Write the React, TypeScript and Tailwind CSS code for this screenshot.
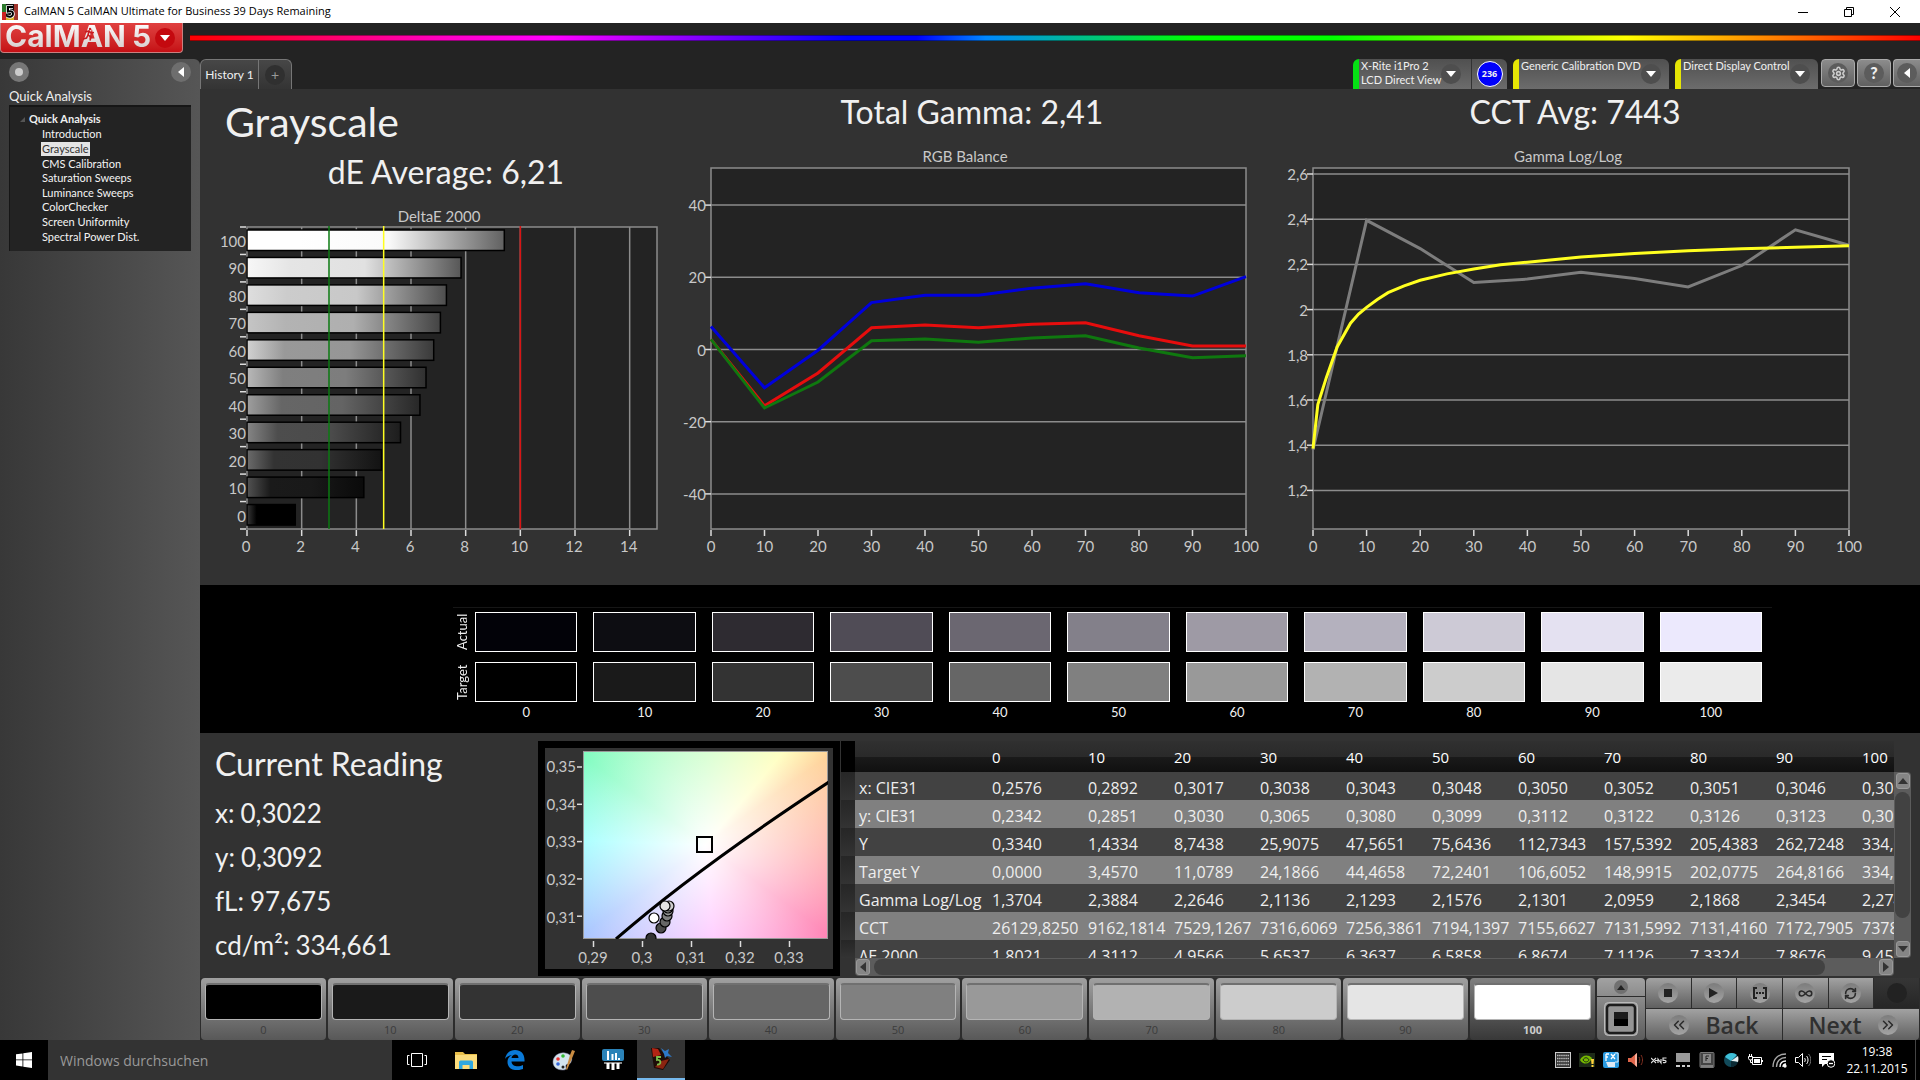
import React, { useState } from 'react';
import { Settings, RefreshCw, Infinity as InfinityIcon, ChevronsLeft, ChevronsRight } from 'lucide-react';

const LEVELS = [0, 10, 20, 30, 40, 50, 60, 70, 80, 90, 100];

const DELTA_E = [1.8021, 4.3112, 4.9566, 5.6537, 6.3637, 6.5858, 6.8674, 7.1126, 7.3324, 7.8676, 9.45];

const RGB_SERIES = [
  { color: '#0000dc', values: [6.4, -10.6, -0.2, 13, 15, 15, 17, 18.2, 15.7, 14.8, 20.2] },
  { color: '#e60d0d', values: [2.8, -15.6, -6.5, 6, 6.8, 6, 7, 7.4, 3.8, 1, 1] },
  { color: '#0f780f', values: [2.8, -16.2, -9, 2.4, 2.9, 2, 3.2, 3.8, 0.4, -2.3, -1.7] },
];

const GAMMA_MEASURED = [1.38, 2.395, 2.27, 2.12, 2.135, 2.165, 2.138, 2.1, 2.195, 2.353, 2.285];

const GAMMA_TARGET: [number, number][] = [
  [0, 1.385], [0.9, 1.58], [2.5, 1.7], [4.5, 1.835], [7, 1.94], [8.5, 1.98], [10, 2.01], [12, 2.045], [14, 2.075],
  [17, 2.105], [20, 2.13], [25, 2.158], [30, 2.18], [35, 2.198], [40, 2.21], [50, 2.233], [60, 2.248], [70, 2.26],
  [80, 2.269], [90, 2.276], [100, 2.283],
];

const SWATCHES = [
  { actual: '#020208', target: '#000000' },
  { actual: '#0d0d12', target: '#1a1a1a' },
  { actual: '#2e2b31', target: '#333333' },
  { actual: '#504c56', target: '#4d4d4d' },
  { actual: '#6b6771', target: '#666666' },
  { actual: '#83808a', target: '#808080' },
  { actual: '#9e9aa5', target: '#999999' },
  { actual: '#b4b1be', target: '#b2b2b2' },
  { actual: '#cdcad6', target: '#cccccc' },
  { actual: '#e4e1f1', target: '#e5e5e5' },
  { actual: '#ece9fd', target: '#ebebeb' },
];

const PATTERNS = ['#000000', '#1a1a1a', '#333333', '#4d4d4d', '#666666', '#808080', '#999999', '#b2b2b2', '#cccccc', '#e5e5e5', '#ffffff'];

const ROWS: { label: string; values: string[] }[] = [
  { label: 'x: CIE31', values: ['0,2576', '0,2892', '0,3017', '0,3038', '0,3043', '0,3048', '0,3050', '0,3052', '0,3051', '0,3046', '0,3022'] },
  { label: 'y: CIE31', values: ['0,2342', '0,2851', '0,3030', '0,3065', '0,3080', '0,3099', '0,3112', '0,3122', '0,3126', '0,3123', '0,3092'] },
  { label: 'Y', values: ['0,3340', '1,4334', '8,7438', '25,9075', '47,5651', '75,6436', '112,7343', '157,5392', '205,4383', '262,7248', '334,661'] },
  { label: 'Target Y', values: ['0,0000', '3,4570', '11,0789', '24,1866', '44,4658', '72,2401', '106,6052', '148,9915', '202,0775', '264,8166', '334,661'] },
  { label: 'Gamma Log/Log', values: ['1,3704', '2,3884', '2,2646', '2,1136', '2,1293', '2,1576', '2,1301', '2,0959', '2,1868', '2,3454', '2,274'] },
  { label: 'CCT', values: ['26129,8250', '9162,1814', '7529,1267', '7316,6069', '7256,3861', '7194,1397', '7155,6627', '7131,5992', '7131,4160', '7172,7905', '7378'] },
  { label: 'ΔE 2000', values: ['1,8021', '4,3112', '4,9566', '5,6537', '6,3637', '6,5858', '6,8674', '7,1126', '7,3324', '7,8676', '9,45'] },
];

const PAGES = ['Introduction', 'Grayscale', 'CMS Calibration', 'Saturation Sweeps', 'Luminance Sweeps', 'ColorChecker', 'Screen Uniformity', 'Spectral Power Dist.'];

function gray(v: number): string {
  const c = Math.max(0, Math.min(255, Math.round(v)));
  return `rgb(${c},${c},${c})`;
}

function TitleBar() {
  return (
    <div className="flex h-[23px] shrink-0 items-center bg-white px-[2px] text-black">
      <svg viewBox="0 0 16 16" className="h-4 w-4">
        <rect width="16" height="16" fill="#111" />
        <path d="M0 0h4v8H0z" fill="#2c7a2c" />
        <path d="M0 8h4v8H0z" fill="#c22" />
        <path d="M12 0h4v16h-4z" fill="#a0342c" />
        <path d="M4 13h8v3H4z" fill="#d8b020" />
        <path d="M11 3H6v4.500c4-1 5 .5 5 2.500 0 2.500-3 3.500-6 2" fill="none" stroke="#fff" strokeWidth="3.600" />
        <path d="M11 3H6v4.500c4-1 5 .5 5 2.500 0 2.500-3 3.500-6 2" fill="none" stroke="#000" strokeWidth="2" />
      </svg>
      <span className="ml-1.5 font-['Open_Sans',sans-serif] text-[11px]">CalMAN 5 CalMAN Ultimate for Business 39 Days Remaining</span>
      <div className="ml-auto flex h-full">
        <button type="button" aria-label="Minimize" className="flex w-[46px] items-center justify-center">
          <svg viewBox="0 0 10 10" className="h-[10px] w-[10px]"><path d="M0 5.500h10" stroke="#000" /></svg>
        </button>
        <button type="button" aria-label="Restore" className="flex w-[46px] items-center justify-center">
          <svg viewBox="0 0 10 10" className="h-[10px] w-[10px]" fill="none" stroke="#000">
            <path d="M.5 2.500h7v7h-7zM2.500 2.500v-2h7v7h-2" />
          </svg>
        </button>
        <button type="button" aria-label="Close" className="flex w-[46px] items-center justify-center">
          <svg viewBox="0 0 10 10" className="h-[10px] w-[10px]"><path d="M0 0l10 10M10 0L0 10" stroke="#000" /></svg>
        </button>
      </div>
    </div>
  );
}

function Header() {
  return (
    <div className="flex h-9 shrink-0 items-start">
      <button
        type="button"
        aria-label="CalMAN 5 menu"
        className="flex h-[30px] w-[183px] items-center rounded-b border border-t-0 border-[#c98080] bg-linear-to-b from-[#e04040] to-[#c50e14] pl-1"
      >
        <span className="relative bg-linear-to-b from-white to-[#cfc4c4] bg-clip-text pb-1 font-['Inter',sans-serif] text-[30px] leading-7 font-bold text-transparent">
          CalMAN
          <svg viewBox="0 0 12 14" className="absolute top-[5px] left-[78px] h-[14px] w-3" fill="none" stroke="#c91c20" strokeWidth="1.600">
            <circle cx="7" cy="2" r="1.200" fill="#c91c20" stroke="none" />
            <path d="M2 5l4-1 2 2 3-.5M6 4.500L5 8l3 2-1 3.500M5 8l-1.500 3L0 12" />
          </svg>
        </span>
        <span className="ml-1.5 bg-linear-to-b from-white to-[#cfc4c4] bg-clip-text pb-1 font-['Inter',sans-serif] text-[30px] leading-7 font-bold text-transparent">5</span>
        <span className="ml-auto mr-[7px] flex h-5 w-5 items-center justify-center rounded-full bg-[#c4090f]">
          <svg viewBox="0 0 10 6" className="h-[6px] w-[10px]"><path d="M0 0h10L5 6z" fill="#fff" /></svg>
        </span>
      </button>
      <div className="mt-3 ml-[7px] h-1.5 flex-1 border-y border-black/40 bg-[linear-gradient(90deg,#f00_0%,#ff00c8_15%,#f0f_21%,#80f_29%,#00f_38%,#00f_42%,#08f_46%,#0f0_58%,#0f0_66%,#ff0_83%,#f80_91%,#f00_100%)]" />
    </div>
  );
}

function Sidebar() {
  const [page, setPage] = useState('Grayscale');
  return (
    <aside className="flex w-[200px] shrink-0 flex-col rounded-tr-md bg-linear-to-r from-[#383838] to-[#565656] px-[9px] font-['Lato',sans-serif] text-[#eee]">
      <div className="flex h-[26px] items-center justify-between">
        <button type="button" aria-label="Record" className="flex h-5 w-5 items-center justify-center rounded-full bg-[#777]">
          <span className="h-2 w-2 rounded-full bg-[#ccc]" />
        </button>
        <button type="button" aria-label="Collapse sidebar" className="flex h-5 w-5 items-center justify-center rounded-full bg-[#6e6e6e]">
          <svg viewBox="0 0 6 10" className="h-[10px] w-[6px]"><path d="M6 0v10L0 5z" fill="#fff" /></svg>
        </button>
      </div>
      <h2 className="mt-[3px] text-[13px] leading-[17px]">Quick Analysis</h2>
      <nav className="h-[146px] border-t-2 border-l border-[#161616] bg-[#232323] pt-1 pl-[10px] text-[11px]">
        <div className="flex h-4 items-center gap-1 font-bold">
          <svg viewBox="0 0 5 5" className="h-[5px] w-[5px]"><path d="M5 0v5H0z" fill="#555" /></svg>
          Quick Analysis
        </div>
        <ul className="grid h-[117px] grid-rows-8 pl-[21px] leading-[14px]">
          {PAGES.map((name) => (
            <li key={name} className="flex">
              <button
                type="button"
                onClick={() => setPage(name)}
                className={name === page ? 'bg-[#e4e4e4] px-px text-[#333]' : 'px-px text-[#f4f4f4]'}
              >
                {name}
              </button>
            </li>
          ))}
        </ul>
      </nav>
    </aside>
  );
}

function CaretButton({ label }: { label: string }) {
  return (
    <button type="button" aria-label={label} className="flex h-5 w-5 items-center justify-center rounded-full bg-[#4e4e4e]">
      <svg viewBox="0 0 10 6" className="h-[6px] w-[10px]"><path d="M0 0h10L5 6z" fill="#fff" /></svg>
    </button>
  );
}

function TopTabs() {
  const square = 'flex h-[28px] items-center justify-center rounded border border-[#aaa] bg-linear-to-b from-[#8c8c8c] to-[#606060]';
  return (
    <div className="flex h-[30px] shrink-0 font-['Lato',sans-serif] text-[#f0f0f0]">
      <div className="flex rounded-t-md border border-b-0 border-[#767676] bg-linear-to-b from-[#474747] to-[#343434]">
        <button type="button" className="w-[58px] border-r border-[#767676] text-[12px]">History 1</button>
        <button type="button" aria-label="Add history" className="flex w-8 items-center justify-center">
          <span className="flex h-5 w-5 items-center justify-center rounded-full bg-[#303030] text-[14px] text-[#999]">+</span>
        </button>
      </div>
      <div className="ml-auto flex text-[11px] leading-[14px]">
        <div className="flex w-[154px] overflow-hidden rounded-t-md border-l-[6px] border-[#05e014] bg-linear-to-b from-[#505050] to-[#6c6c6c]">
          <div className="w-[82px] pl-[2px] whitespace-nowrap">X-Rite i1Pro 2<br />LCD Direct View</div>
          <div className="flex w-[30px] items-center"><CaretButton label="Select meter" /></div>
          <div className="flex flex-1 items-center justify-center border-l border-[#333]">
            <span className="flex h-[26px] w-[26px] items-center justify-center rounded-full border border-white bg-[#0000fa] font-['Open_Sans',sans-serif] text-[9px] font-bold">236</span>
          </div>
        </div>
        <div className="ml-[6px] flex w-[156px] justify-between overflow-hidden rounded-t-md border-l-[6px] border-[#e6e605] bg-linear-to-b from-[#505050] to-[#6c6c6c]">
          <span className="pl-[2px] whitespace-nowrap">Generic Calibration DVD</span>
          <div className="mr-2 flex items-center"><CaretButton label="Select source" /></div>
        </div>
        <div className="ml-[6px] flex w-[143px] justify-between overflow-hidden rounded-t-md border-l-[6px] border-[#e6e605] bg-linear-to-b from-[#505050] to-[#6c6c6c]">
          <span className="pl-[2px] whitespace-nowrap">Direct Display Control</span>
          <div className="mr-2 flex items-center"><CaretButton label="Select display" /></div>
        </div>
        <div className="ml-[3px] flex gap-[2px]">
          <button type="button" aria-label="Settings" className={`${square} w-[34px]`}>
            <span className="flex h-5 w-5 items-center justify-center rounded-full bg-[#5c5c5c]"><Settings size={15} strokeWidth={2.5} className="text-[#ccc]" /></span>
          </button>
          <button type="button" aria-label="Help" className={`${square} w-[34px]`}>
            <span className="flex h-5 w-5 items-center justify-center rounded-full bg-[#5c5c5c] text-[16px] font-black">?</span>
          </button>
          <button type="button" aria-label="Collapse" className={`${square} w-[27px] rounded-r-none border-r-0`}>
            <span className="flex h-5 w-5 items-center justify-center rounded-full bg-[#5c5c5c]">
              <svg viewBox="0 0 6 10" className="h-[10px] w-[6px]"><path d="M6 0v10L0 5z" fill="#fff" /></svg>
            </span>
          </button>
        </div>
      </div>
    </div>
  );
}

function DeltaEChart() {
  const left = 47, right = 457, top = 38, bottom = 340;
  const x = (v: number) => left + (v / 15) * (right - left);
  const rowH = (bottom - top) / 11;
  return (
    <svg viewBox="0 0 480 390" className="block w-full font-['Lato',sans-serif]" fill="#c8c8c8" fontSize="15">
      <defs>
        {LEVELS.map((lv) => {
          const base = lv * 2.55;
          return (
            <linearGradient key={lv} id={`bar-${lv}`}>
              <stop offset="0" stopColor={gray(base + (lv > 60 ? 18 : 56))} />
              <stop offset=".2" stopColor={gray(base)} />
              <stop offset=".55" stopColor={gray(base * 0.98)} />
              <stop offset="1" stopColor={gray(base * 0.38)} />
            </linearGradient>
          );
        })}
      </defs>
      <text x="239" y="33" textAnchor="middle">DeltaE 2000</text>
      <rect x={left} y={top} width={right - left} height={bottom - top} fill="#232323" />
      {[2, 4, 6, 8, 10, 12, 14].map((v) => (
        <path key={v} d={`M${x(v)} ${top}V${bottom}`} stroke="#8c8c8c" strokeWidth="1.500" />
      ))}
      <rect x={left} y={top} width={right - left} height={bottom - top} fill="none" stroke="#8c8c8c" strokeWidth="1.500" />
      {LEVELS.map((lv, i) => {
        const y = bottom - (i + 1) * rowH + 2;
        return (
          <g key={lv}>
            <rect x={left} y={y + 1} width={x(DELTA_E[i]) - left - 1} height="20.500" fill={`url(#bar-${lv})`} stroke="#000" strokeWidth="1.500" />
            <text x="46" y={y + 18} textAnchor="end">{lv}</text>
          </g>
        );
      })}
      {Array.from({ length: 12 }, (_, i) => (
        <path key={i} d={`M40 ${top + i * rowH}h6`} stroke="#ddd" strokeWidth="1.500" />
      ))}
      {[0, 2, 4, 6, 8, 10, 12, 14].map((v) => (
        <g key={v}>
          <path d={`M${x(v)} ${bottom + 1}v6`} stroke="#ddd" strokeWidth="1.500" />
          <text x={x(v) - 1} y="363" textAnchor="middle">{v}</text>
        </g>
      ))}
      <path d={`M${x(3)} ${top - 1}V${bottom}`} stroke="#0b7a12" strokeWidth="1.500" />
      <path d={`M${x(5)} ${top - 1}V${bottom}`} stroke="#ffff20" strokeWidth="1.500" />
      <path d={`M${x(10)} ${top - 1}V${bottom}`} stroke="#d81414" strokeWidth="1.500" />
    </svg>
  );
}

interface LineChartProps {
  width: number;
  left: number;
  right: number;
  title: string;
  titleX: number;
  ticks: number[];
  y: (v: number) => number;
  series: { color: string; points: [number, number][] }[];
}

function LineChart({ width, left, right, title, titleX, ticks, y, series }: LineChartProps) {
  const top = 33, bottom = 394;
  const x = (v: number) => left + (v / 100) * (right - left);
  return (
    <svg viewBox={`0 0 ${width} 440`} className="block w-full font-['Lato',sans-serif]" fill="#c8c8c8" fontSize="15">
      <text x={titleX} y="27" textAnchor="middle">{title}</text>
      <rect x={left} y={top} width={right - left} height={bottom - top} fill="#232323" stroke="#8c8c8c" strokeWidth="1.500" />
      {ticks.map((v) => (
        <g key={v}>
          <path d={`M${left} ${y(v)}H${right}`} stroke="#8c8c8c" strokeWidth="1.500" />
          <path d={`M${left - 6} ${y(v)}h6`} stroke="#ddd" strokeWidth="1.500" />
          <text x={left - 5} y={y(v) + 6} textAnchor="end">{String(v).replace('.', ',')}</text>
        </g>
      ))}
      {LEVELS.map((v) => (
        <g key={v}>
          <path d={`M${x(v)} ${bottom + 1}v6`} stroke="#ddd" strokeWidth="1.500" />
          <text x={x(v)} y="417" textAnchor="middle">{v}</text>
        </g>
      ))}
      {series.map((s) => (
        <polyline
          key={s.color}
          points={s.points.map(([px, py]) => `${x(px)},${y(py)}`).join(' ')}
          fill="none"
          stroke={s.color}
          strokeWidth="3"
        />
      ))}
    </svg>
  );
}

function Charts() {
  const heading = 'text-center text-[32px] leading-[46px]';
  return (
    <section className="grid flex-1 grid-cols-[480fr_584fr_622fr] overflow-hidden bg-[#323232] pr-[34px] font-['Lato',sans-serif] text-[#f0f0f0]">
      <div>
        <h1 className="pl-[25px] text-[41px] leading-[66px]">Grayscale</h1>
        <h2 className="pl-3 text-center text-[32px] leading-[34px]">dE Average: 6,21</h2>
        <DeltaEChart />
      </div>
      <div>
        <h2 className={heading}>Total Gamma: 2,41</h2>
        <LineChart
          width={584}
          left={31}
          right={566}
          title="RGB Balance"
          titleX={285}
          ticks={[40, 20, 0, -20, -40]}
          y={(v) => 214.500 - v * 3.61}
          series={RGB_SERIES.map((s) => ({
            color: s.color,
            points: s.values.map((v, i): [number, number] => [i * 10, v]),
          }))}
        />
      </div>
      <div>
        <h2 className={heading}>CCT Avg: 7443</h2>
        <LineChart
          width={622}
          left={49}
          right={585}
          title="Gamma Log/Log"
          titleX={304}
          ticks={[2.6, 2.4, 2.2, 2, 1.8, 1.6, 1.4, 1.2]}
          y={(v) => 39 + (2.6 - v) * 226}
          series={[
            { color: '#7d7d7d', points: GAMMA_MEASURED.map((v, i): [number, number] => [i * 10, v]) },
            { color: '#ffff20', points: GAMMA_TARGET },
          ]}
        />
      </div>
    </section>
  );
}

function SwatchBand() {
  return (
    <section className="h-[148px] shrink-0 bg-black pt-[22px] pr-[148px] pl-[253px] font-['Lato',sans-serif] text-[#f0f0f0]">
      <div className="flex border-t border-[#161616] pt-1 pr-[10px]">
        <div className="flex w-[22px] flex-col items-start gap-[10px] text-[13px] leading-[18px]">
          <span className="h-10 rotate-180 text-center [writing-mode:vertical-rl]">Actual</span>
          <span className="h-10 rotate-180 text-center [writing-mode:vertical-rl]">Target</span>
        </div>
        <div className="grid flex-1 grid-cols-11 gap-x-4">
          {SWATCHES.map((s, i) => (
            <div key={i} className="flex flex-col gap-[10px]">
              <div className="h-10 border border-white" style={{ backgroundColor: s.actual }} />
              <div className="h-10 border border-white" style={{ backgroundColor: s.target }} />
              <span className="-mt-[8px] text-center text-[13px] leading-4">{LEVELS[i]}</span>
            </div>
          ))}
        </div>
      </div>
    </section>
  );
}

function CieChart() {
  const dots: [number, number, string][] = [
    [106, 190, '#333'], [116, 180, '#4a4a4a'], [120, 174, '#666'], [122, 168, '#808080'],
    [123, 163, '#999'], [123, 160, '#b2b2b2'], [124, 158, '#ccc'], [120, 158, '#e4e4e4'], [109, 170, '#fff'],
  ];
  return (
    <div className="mt-2 h-[235px] w-[302px] shrink-0 border-[7px] border-black bg-[#323232]">
      <svg viewBox="0 0 288 221" className="block h-full w-full font-['Lato',sans-serif]" fill="#c8c8c8" fontSize="15">
        <clipPath id="cie-clip"><rect x="38" y="3" width="245" height="188" /></clipPath>
        <foreignObject x="38" y="3" width="245" height="188">
          <div className="h-full w-full border border-[#999] bg-[radial-gradient(circle_at_50%_50%,#fff_0%,#fff0_100%),conic-gradient(#c0ffb8_0deg,#ffffb0_40deg,#ffd298_54deg,#ffada4_90deg,#ff84b4_126deg,#ffb0ff_175deg,#a8c6ff_234deg,#98ffff_272deg,#80fcc0_306deg,#c0ffb8_360deg)]" />
        </foreignObject>
        <g clipPath="url(#cie-clip)">
          <path d="M71 191Q150 122 284 34" fill="none" stroke="#000" strokeWidth="3" />
          {dots.map(([cx, cy, fill], i) => (
            <circle key={i} cx={cx} cy={cy} r="5" fill={fill} stroke="#000" strokeWidth="1.200" />
          ))}
        </g>
        <rect x="152" y="89" width="15" height="15" fill="none" stroke="#000" strokeWidth="2" />
        {['0,35', '0,34', '0,33', '0,32', '0,31'].map((t, i) => (
          <g key={t}>
            <path d={`M32 ${19 + i * 37.3}h5`} stroke="#ddd" strokeWidth="1.500" />
            <text x="31" y={24 + i * 37.7} textAnchor="end">{t}</text>
          </g>
        ))}
        {['0,29', '0,3', '0,31', '0,32', '0,33'].map((t, i) => (
          <g key={t}>
            <path d={`M${48.500 + i * 49} 193v6`} stroke="#ddd" strokeWidth="1.500" />
            <text x={48 + i * 49} y="215" textAnchor="middle">{t}</text>
          </g>
        ))}
      </svg>
    </div>
  );
}

function ScrollArrow({ label, d }: { label: string; d: string }) {
  return (
    <button type="button" aria-label={label} className="flex h-4 w-[14px] shrink-0 items-center justify-center rounded-[3px] border border-[#999] bg-[#858585]">
      <svg viewBox="0 0 10 10" className="h-[10px] w-[10px]"><path d={d} fill="#333" /></svg>
    </button>
  );
}

function ReadingsTable() {
  return (
    <div className="mt-2 ml-px flex min-w-0 flex-1 font-['Open_Sans',sans-serif] text-[16px] text-[#eee]">
      <div className="flex w-[14px] shrink-0 flex-col">
        <div className="h-[31px] bg-black" />
        {ROWS.map((r) => (
          <div key={r.label} className="h-7 bg-linear-to-b from-[#262626] to-[#333] last:h-[18px]" />
        ))}
      </div>
      <div className="flex min-w-0 flex-1 flex-col">
        <div className="h-[217px] overflow-hidden">
          <table className="w-[1089px] table-fixed border-collapse text-left">
            <colgroup>
              <col className="w-[133px]" />
              <col className="w-[96px]" />
              {LEVELS.slice(1).map((lv) => <col key={lv} className="w-[86px]" />)}
            </colgroup>
            <thead>
              <tr className="h-[31px] bg-[linear-gradient(180deg,#303030_0%,#2a2a2a_50%,#1a1a1a_52%,#101010_100%)] text-[15px]">
                <th className="p-0" aria-label="Measurement" />
                {LEVELS.map((lv) => (
                  <th key={lv} scope="col" className="p-0 pt-[2px] pl-1 font-normal text-white">{lv}</th>
                ))}
              </tr>
            </thead>
            <tbody>
              {ROWS.map((r) => (
                <tr key={r.label} className="h-7 bg-[#424242] leading-6 even:bg-[#808080]">
                  <th scope="row" className="p-0 pt-[3px] pl-1 font-normal whitespace-nowrap">{r.label}</th>
                  {r.values.map((v, i) => <td key={i} className="p-0 pt-[3px] pl-1 whitespace-nowrap">{v}</td>)}
                </tr>
              ))}
            </tbody>
          </table>
        </div>
        <div className="flex h-[18px] items-center gap-1 rounded-b bg-[#5c5c5c] px-px">
          <ScrollArrow label="Scroll left" d="M8 0v10L2 5z" />
          <div className="flex-1"><div className="h-4 w-[95%] rounded-full bg-[#424242]" /></div>
          <ScrollArrow label="Scroll right" d="M2 0v10l6-5z" />
        </div>
      </div>
      <div className="mt-[31px] mr-[9px] flex h-[186px] w-[17px] shrink-0 flex-col items-center gap-[3px] rounded-r bg-[#5c5c5c] py-px">
        <ScrollArrow label="Scroll up" d="M0 8h10L5 2z" />
        <div className="w-full flex-1 px-px"><div className="h-[86%] rounded-full bg-[#424242]" /></div>
        <ScrollArrow label="Scroll down" d="M0 2h10L5 8z" />
      </div>
    </div>
  );
}

function LowerPanel() {
  return (
    <section className="flex h-[245px] shrink-0 overflow-hidden bg-[#323232]">
      <div className="w-[338px] shrink-0 pt-2 pl-[15px] font-['Lato',sans-serif] text-[#f0f0f0]">
        <h2 className="text-[32px] leading-[46px]">Current Reading</h2>
        <dl className="pt-1 text-[26px] leading-[44px]">
          {[['x', '0,3022'], ['y', '0,3092'], ['fL', '97,675'], ['cd/m²', '334,661']].map(([k, v]) => (
            <div key={k} className="flex gap-[6px]">
              <dt>{k}:</dt>
              <dd>{v}</dd>
            </div>
          ))}
        </dl>
      </div>
      <CieChart />
      <ReadingsTable />
    </section>
  );
}

function Disc({ children }: { children?: React.ReactNode }) {
  return <span className="flex h-5 w-5 items-center justify-center rounded-full bg-linear-to-b from-[#7c7c7c] to-[#a4a4a4] text-[#2a2a2a]">{children}</span>;
}

function PatternStrip() {
  const [level, setLevel] = useState(100);
  const cell = 'flex items-center justify-center bg-linear-to-b from-[#a2a2a2] to-[#606060]';
  return (
    <section className="flex h-[62px] shrink-0 gap-px bg-[#2c2c2c] pl-px">
      <div className="grid flex-1 grid-cols-11 gap-[2px] font-['Open_Sans',sans-serif]">
        {PATTERNS.map((color, i) => (
          <button
            key={color}
            type="button"
            onClick={() => setLevel(LEVELS[i])}
            className={
              LEVELS[i] === level
                ? 'flex flex-col items-center rounded bg-linear-to-b from-[#808080] to-[#383838] px-1 pt-[5px] text-[11px] font-bold text-[#ccc]'
                : 'flex flex-col items-center rounded bg-linear-to-b from-[#a0a0a0] to-[#585858] px-1 pt-[5px] text-[11px] text-[#3c3c3c]'
            }
          >
            <span className="h-[37px] w-full rounded border border-t-2 border-[#b4b4b4] border-t-[#707070]" style={{ backgroundColor: color }} />
            <span className="leading-[20px]">{LEVELS[i]}</span>
          </button>
        ))}
      </div>
      <div className="ml-px flex w-12 flex-col gap-px">
        <button type="button" aria-label="Expand" className="flex h-[18px] items-center justify-center rounded-t bg-linear-to-b from-[#a2a2a2] to-[#8c8c8c]">
          <span className="flex h-[14px] w-[14px] items-center justify-center rounded-full bg-[#707070]">
            <svg viewBox="0 0 8 5" className="h-[5px] w-2"><path d="M0 5h8L4 0z" fill="#222" /></svg>
          </span>
        </button>
        <button type="button" aria-label="Pattern window" className="flex flex-1 items-center justify-center rounded-b bg-linear-to-b from-[#8c8c8c] to-[#5c5c5c]">
          <svg viewBox="0 0 34 34" className="h-[34px] w-[34px]">
            <rect x=".5" y=".5" width="33" height="33" rx="4" fill="#999" stroke="#bbb" />
            <rect x="3" y="3" width="28" height="28" rx="3" fill="#949494" stroke="#1c1c1c" strokeWidth="2.500" />
            <path d="M10 10h14v14H10z" fill="#000" />
            <path d="M10 10h14v7H10z" fill="#1c1c1c" />
          </svg>
        </button>
      </div>
      <div className="mr-px flex w-[273px] flex-col gap-px">
        <div className="grid h-[30px] grid-cols-6 gap-px">
          <button type="button" aria-label="Stop" className={`${cell} rounded-tl`}><Disc><span className="h-2 w-2 bg-[#222]" /></Disc></button>
          <button type="button" aria-label="Read single" className={cell}>
            <Disc><svg viewBox="0 0 9 10" className="h-[10px] w-[9px]"><path d="M0 0v10l9-5z" fill="#222" /></svg></Disc>
          </button>
          <button type="button" aria-label="Read series" className={cell}>
            <Disc>
              <svg viewBox="0 0 14 12" className="h-3 w-[14px]" fill="none" stroke="#222" strokeWidth="2">
                <path d="M4 1H1v10h3M10 1h3v10h-3" /><path d="M3 6h8" strokeDasharray="2 1" />
              </svg>
            </Disc>
          </button>
          <button type="button" aria-label="Read continuous" className={cell}><Disc><InfinityIcon size={15} strokeWidth={2.5} /></Disc></button>
          <button type="button" aria-label="Refresh" className={cell}><Disc><RefreshCw size={13} strokeWidth={3} /></Disc></button>
          <div className="flex items-center justify-center bg-linear-to-b from-[#363636] to-[#262626]"><span className="h-5 w-5 rounded-full bg-[#222]" /></div>
        </div>
        <div className="grid flex-1 grid-cols-2 gap-px font-['Open_Sans',sans-serif] text-[23px] leading-7 font-semibold text-[#303030]">
          <button type="button" className={`${cell} gap-4 rounded-bl`}><Disc><ChevronsLeft size={18} /></Disc>Back</button>
          <button type="button" className={`${cell} gap-4 rounded-br pl-1`}>Next<Disc><ChevronsRight size={18} /></Disc></button>
        </div>
      </div>
    </section>
  );
}

function TrayIcons() {
  return (
    <div className="flex items-center gap-2">
      <svg viewBox="0 0 16 16" className="h-4 w-4"><rect x=".5" y=".5" width="15" height="15" fill="#333" stroke="#ccc" /><path d="M2 3.500h12M2 6.500h12M2 9.500h12M2 12.500h12" stroke="#bbb" strokeDasharray="1.500 .6" strokeWidth="1.600" /></svg>
      <svg viewBox="0 0 16 16" className="h-4 w-4"><rect y="1" width="16" height="14" fill="#1d2a18" /><path d="M1 8c2-5 8-6 12-2-2 6-8 8-12 2z" fill="#76b900" /><path d="M4 8c1-3 5-3 6 0-1 2-4 3-6 0z" fill="none" stroke="#1d2a18" /><path d="M12 7h3l-.5 5h-2zM12.500 13h2v2h-2z" fill="#ffd23c" /></svg>
      <svg viewBox="0 0 16 16" className="h-4 w-4"><rect width="16" height="16" rx="2" fill="#2a9ae0" /><path d="M3 2v7M3 2h3M3 5h2M8 2l4 5M12 2L8 7" stroke="#fff" strokeWidth="1.300" /><path d="M3 10h9v5H5z" fill="#dce9f5" /><path d="M12 1h3v9h-3" fill="none" stroke="#dce9f5" /></svg>
      <svg viewBox="0 0 16 16" className="h-4 w-4"><path d="M1 6h3l6-5v14l-6-5H1z" fill="#e0654a" /><path d="M8 3l2-2v14l-2-2z" fill="#f6b09c" /><path d="M12 5c1 2 1 4 0 6M14 3c2 3 2 7 0 10" fill="none" stroke="#843020" /></svg>
      <svg viewBox="0 0 16 16" className="h-4 w-4" fill="none" stroke="#ddd" strokeWidth="1.200"><path d="M0 6l5 5M5 6l-5 5M4 8.500h3M7 11V7l3 4V7M15.500 6H12v2.500c4-1 4 3 0 2" /></svg>
      <svg viewBox="0 0 16 16" className="h-4 w-4"><path d="M1 1h14v9H1z" fill="#9a9a9a" /><path d="M1 13h4v2H1zM7 13h3v2H7zM12 13h3v2h-3z" fill="#ccc" /></svg>
      <svg viewBox="0 0 16 16" className="h-4 w-4"><rect x="1" y=".5" width="14" height="15" rx="1" fill="#444" stroke="#777" /><path d="M4 2h8v9H4z" fill="#888" /><path d="M7 9V4h3M7 6.500h2" stroke="#222" fill="none" /><path d="M2 14h12" stroke="#bbb" /></svg>
      <svg viewBox="0 0 16 16" className="h-4 w-4"><circle cx="8" cy="8" r="7" fill="#124a5a" /><path d="M2 5c3-5 9-5 12-2L8 9z" fill="#3fc0d8" /><path d="M8 9l7-5c.6 2 .5 4 0 6z" fill="#e8eef0" /><path d="M8 9l7 1c-1 3-4 5-7 5z" fill="#0b2a34" /></svg>
      <svg viewBox="0 0 16 16" className="h-4 w-4" fill="none" stroke="#fff"><path d="M5.500 5.500h9v7h-9z" /><path d="M7 7h6v4H7z" fill="#fff" stroke="none" /><path d="M1.500 4.500h4v2l-1 1.500h-2l-1-1.500zM2.500 2v2.500M4.500 2v2.500M3.500 8v2.500h2" /><path d="M15.500 8v2" /></svg>
      <svg viewBox="0 0 16 16" className="h-4 w-4" fill="none" stroke="#fff" strokeWidth="1.300"><path d="M12 15c0-2 1-3 3-3M9 15c0-4 2-6 6-6" /><path d="M5.500 15c0-6 4-9.500 9.500-9.500M2 15C2 7 7 2 15 2" stroke="#aaa" /><circle cx="14" cy="14" r="1" fill="#fff" /></svg>
      <svg viewBox="0 0 16 16" className="h-4 w-4" fill="none" stroke="#fff"><path d="M.5 5.500h3l4-4v13l-4-4h-3z" /><path d="M9.500 6c1 1 1 3 0 4M11.500 4c2 2 2 6 0 8" /><path d="M13.500 2c3 3 3 9 0 12" stroke="#777" /></svg>
      <svg viewBox="0 0 16 16" className="h-4 w-4"><path d="M0 1h15v11H6l-3 3v-3H0z" fill="#fff" /><path d="M3 4.500h9M3 7.500h5" stroke="#000" /><circle cx="12" cy="11.500" r="3.800" fill="#000" stroke="#fff" /><path d="M10 11.500h4" stroke="#fff" strokeWidth="1.300" /></svg>
    </div>
  );
}

function Taskbar() {
  const app = 'flex h-full w-[49px] items-center justify-center';
  return (
    <footer className="flex h-10 shrink-0 items-center bg-black font-['Open_Sans',sans-serif]">
      <button type="button" aria-label="Start" className="flex w-12 justify-center">
        <svg viewBox="0 0 16 16" className="h-4 w-4" fill="#fff"><path d="M0 2.300l6.500-.9v6.100H0zM7.300 1.300L16 0v7.500H7.300zM0 8.300h6.500v6.200L0 13.600zM7.300 8.300H16V16l-8.700-1.300z" /></svg>
      </button>
      <input
        type="text"
        aria-label="Windows durchsuchen"
        placeholder="Windows durchsuchen"
        className="h-full w-[344px] bg-[#333] px-3 text-[14px] text-white placeholder:text-[#999]"
      />
      <button type="button" aria-label="Task view" className={app}>
        <svg viewBox="0 0 20 14" className="h-[14px] w-5" fill="none" stroke="#fff"><path d="M4.500.5h11v13h-11zM2.500 2.500h-2v9h2M17.500 2.500h2v9h-2" /></svg>
      </button>
      <button type="button" aria-label="Explorer" className={app}>
        <svg viewBox="0 0 22 18" className="h-[18px] w-[22px]"><path d="M0 1h8l2 2h12v15H0z" fill="#e9bf4a" /><path d="M0 4h22v14H0z" fill="#fbdc7c" /><path d="M4 18V11q0-1.500 1.500-1.500h11Q18 9.500 18 11v7h-3.500v-4h-7v4z" fill="#2fa8e0" /></svg>
      </button>
      <button type="button" aria-label="Edge" className={app}>
        <svg viewBox="0 0 20 20" className="h-5 w-5"><path d="M0 9C1 3 5 0 10 0c6 0 10 4 9.500 11.500H6.500c.2 5 7 6 11.500 3.500v4C10 22 2.500 19 2.500 12 2.500 9 4 6.500 7 5 3.500 5.500 1 7 0 9zm6.500-1H13.500c0-5-6.500-4.500-7 0z" fill="#0a7ad8" /></svg>
      </button>
      <button type="button" aria-label="Paint" className={app}>
        <svg viewBox="0 0 24 22" className="h-[22px] w-6"><path d="M1 13C1 7 7 3 13 4c6 1 8 5 6 9-1 3-4 1-5 3s2 5-3 5C5 21 1 18 1 13z" fill="#d3e4ee" stroke="#88a" strokeWidth=".5" /><circle cx="6" cy="10" r="1.800" fill="#e33" /><circle cx="11" cy="7" r="1.800" fill="#3b3" /><circle cx="6" cy="15" r="1.800" fill="#36d" /><circle cx="11" cy="18" r="1.500" fill="#222" /><path d="M20 1l3 1-2 5-6 14-1-1 4-14z" fill="#c98c42" /></svg>
      </button>
      <button type="button" aria-label="Hardware monitor" className={app}>
        <svg viewBox="0 0 22 22" className="h-[22px] w-[22px]"><rect width="22" height="12" rx="2" fill="#2a82b8" /><path d="M6 2v9M10.500 5v6M14 4v7M17 9v2" stroke="#fff" strokeWidth="2" /><path d="M2 13h18v2H2z" fill="#888" /><path d="M6 14v6M11 14v7M16 14v6" stroke="#fff" strokeWidth="3" /></svg>
      </button>
      <button type="button" aria-label="CalMAN 5" className="flex h-full w-12 items-center justify-center border-b-2 border-[#76b9ed] bg-[#343434]">
        <svg viewBox="0 0 24 24" className="h-6 w-6"><path d="M2 1h8l11 12-7 10-9-2z" fill="#1c0c08" /><path d="M3 1l6 1 3 6-8 2z" fill="#b22414" /><path d="M12 14l8-2-6 10-8-2z" fill="#8a2410" /><path d="M12 10H8v3c4-1 5 5 0 4.500" fill="none" stroke="#7cc04a" strokeWidth="1.800" /><path d="M12 1l4 3 4-2-1 4 4 4-5-1-2 2-1-4z" fill="#2d78c8" /></svg>
      </button>
      <div className="ml-auto"><TrayIcons /></div>
      <div className="ml-[10px] w-[64px] text-center text-[12px] leading-[17px] text-white">
        <div>19:38</div>
        <div>22.11.2015</div>
      </div>
      <div className="mr-1 ml-[6px] h-full w-px bg-[#444]" />
    </footer>
  );
}

export default function App() {
  return (
    <div className="flex h-screen flex-col overflow-hidden bg-[#232323]">
      <TitleBar />
      <Header />
      <div className="flex min-h-0 flex-1">
        <Sidebar />
        <main className="flex min-w-0 flex-1 flex-col">
          <TopTabs />
          <Charts />
          <SwatchBand />
          <LowerPanel />
          <PatternStrip />
        </main>
      </div>
      <Taskbar />
    </div>
  );
}
